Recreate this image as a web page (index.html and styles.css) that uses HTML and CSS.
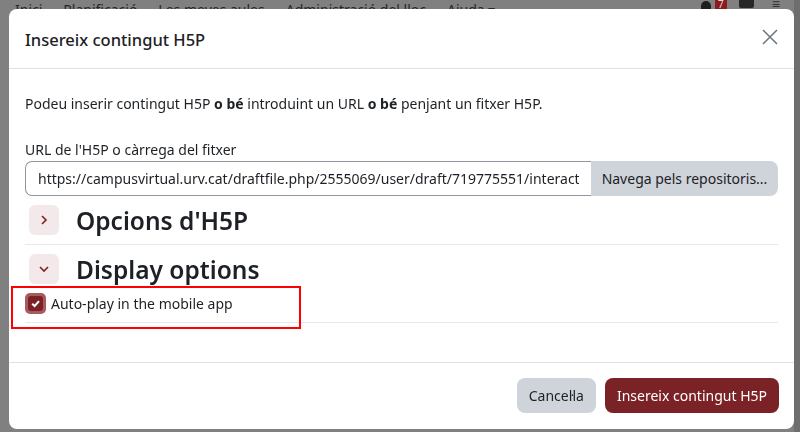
FILE: index.html
```html
<!DOCTYPE html>
<html lang="ca">
<head>
  <meta charset="UTF-8">
  <meta name="viewport" content="width=device-width, initial-scale=1">
  <title>Insereix contingut H5P</title>
  <link rel="stylesheet" href="styles.css">
</head>
<body>
  <!-- Pàgina de fons (sota el fons fosc del diàleg) -->
  <div class="page">
    <nav class="topnav">
      <span>Inici</span>
      <span>Planificació</span>
      <span>Les meves aules</span>
      <span>Administració del lloc</span>
      <span>Ajuda ▾</span>
    </nav>
    <div class="nav-icons">
      <span class="bell"></span>
      <span class="badge">7</span>
      <span class="chat"></span>
      <span class="more">≡</span>
    </div>
  </div>

  <div class="modal">
    <div class="modal-header">
      <h5 class="modal-title">Insereix contingut H5P</h5>
      <button class="close" aria-label="Tanca">
        <svg width="16" height="16" viewBox="0 0 16 16"><path d="M1 1 L15 15 M15 1 L1 15" stroke="#6a737b" stroke-width="1.5" fill="none"/></svg>
      </button>
    </div>

    <div class="modal-body">
      <p class="intro">Podeu inserir contingut H5P <b>o bé</b> introduint un URL <b>o bé</b> penjant un fitxer H5P.</p>

      <label class="field-label">URL de l'H5P o càrrega del fitxer</label>
      <div class="input-group">
        <input type="text" value="https://campusvirtual.urv.cat/draftfile.php/2555069/user/draft/719775551/interactive-video.h5p">
        <button class="btn-browse">Navega pels repositoris...</button>
      </div>

      <div class="section">
        <span class="toggle">
          <svg width="10" height="12" viewBox="0 0 10 12"><path d="M3 2 L7 6 L3 10" stroke="#7b2226" stroke-width="1.6" fill="none"/></svg>
        </span>
        <h3>Opcions d'H5P</h3>
      </div>

      <div class="section open">
        <span class="toggle">
          <svg width="12" height="10" viewBox="0 0 12 10"><path d="M2 3 L6 7 L10 3" stroke="#7b2226" stroke-width="1.6" fill="none"/></svg>
        </span>
        <h3>Display options</h3>
      </div>

      <div class="check-row">
        <span class="checkbox">
          <svg width="10" height="10" viewBox="0 0 10 10"><path d="M2 5.2 L4.2 7.3 L8.2 2.8" stroke="#fff" stroke-width="1.8" fill="none"/></svg>
        </span>
        <span class="check-label">Auto-play in the mobile app</span>
        <div class="highlight"></div>
      </div>
    </div>

    <div class="modal-footer">
      <button class="btn btn-secondary">Cancel·la</button>
      <button class="btn btn-primary">Insereix contingut H5P</button>
    </div>
  </div>
</body>
</html>
```

FILE: styles.css
```css
* {
  margin: 0;
  padding: 0;
  box-sizing: border-box;
}

body {
  font-family: 'Noto Sans', 'Open Sans', sans-serif;
  background: #808080;
  color: #1d2125;
  height: 100vh;
  overflow: hidden;
  border-right: 6px solid #6e6e6e;
}

/* Pàgina de fons */
.page {
  display: flex;
  justify-content: space-between;
  height: 20px;
  padding: 0 14px 0 15px;
}

.topnav {
  display: flex;
  gap: 21px;
  font-size: 14px;
  line-height: 20px;
  margin-top: 0;
  color: #262626;
}

.nav-icons {
  display: flex;
  align-items: flex-start;
  gap: 4px;
}

.bell {
  width: 10px;
  height: 8px;
  margin-top: 1px;
  background: #1f1f1f;
  border-radius: 5px 5px 0 0;
}

.badge {
  background: #8c1b1b;
  color: #ddd;
  font-size: 10px;
  line-height: 9px;
  padding: 0 3px;
  margin-right: 8px;
}

.chat {
  width: 15px;
  height: 8px;
  background: #262626;
  border-radius: 0 0 2px 2px;
  margin-right: 14px;
}

.more {
  font-size: 14px;
  line-height: 8px;
  color: #333;
}

/* Diàleg */
.modal {
  position: fixed;
  top: 9px;
  left: 9px;
  width: 785px;
  height: 420px;
  background: #fff;
  border-radius: 8px;
  display: flex;
  flex-direction: column;
}

.modal-header {
  display: flex;
  justify-content: space-between;
  align-items: center;
  height: 60px;
  padding: 0 16px 0 16px;
  border-bottom: 1px solid #dee2e6;
}

.modal-title {
  font-size: 16.5px;
  font-weight: 500;
  line-height: 22px;
  margin-top: 3px;
}

.close {
  background: none;
  border: none;
  width: 18px;
  height: 18px;
  display: flex;
  align-items: center;
  justify-content: center;
  margin-top: -3px;
  margin-right: -1px;
}

.modal-body {
  flex: 1;
  padding: 23px 16px 0 16px;
  font-size: 14px;
}

.intro {
  line-height: 23px;
  margin-bottom: 23px;
}

.intro b {
  font-weight: 700;
}

.field-label {
  display: block;
  line-height: 23px;
}

.input-group {
  display: flex;
  height: 35px;
}

.input-group input {
  flex: 1;
  min-width: 0;
  border: 1px solid #8f959e;
  border-right: none;
  border-radius: 7px 0 0 7px;
  padding: 0 12px;
  font-family: inherit;
  font-size: 14px;
  color: #1d2125;
}

.btn-browse {
  width: 187px;
  background: #ced4da;
  border: none;
  border-radius: 0 8px 8px 0;
  font-family: inherit;
  font-size: 14px;
  color: #1d2125;
}

.section {
  display: flex;
  align-items: center;
  gap: 17px;
  margin-top: 8px;
  padding: 0 0 8px 4px;
}

.section:not(.open) {
  border-bottom: 1px solid #e6e8ea;
}

.section.open {
  padding-bottom: 0;
}

.toggle {
  width: 30px;
  height: 30px;
  border-radius: 6px;
  background: #f4e9ea;
  display: flex;
  align-items: center;
  justify-content: center;
}

.section h3 {
  font-size: 24.5px;
  font-weight: 600;
  line-height: 30px;
  margin-top: 2px;
}

.check-row {
  position: relative;
  display: flex;
  align-items: center;
  gap: 5px;
  margin-top: 8px;
  padding-bottom: 8px;
  border-bottom: 1px solid #e6e8ea;
}

.checkbox {
  width: 21px;
  height: 21px;
  border-radius: 5px;
  background: #a85a5e;
  display: flex;
  align-items: center;
  justify-content: center;
}

.checkbox svg {
  background: #7b2226;
  width: 15px;
  height: 15px;
  border-radius: 3px;
  padding: 2px;
}

.check-label {
  line-height: 21px;
}

/* Marc vermell d'anotació */
.highlight {
  position: absolute;
  left: -14px;
  top: -7px;
  width: 290px;
  height: 43px;
  border: 2px solid #ff0000;
}

.modal-footer {
  display: flex;
  justify-content: flex-end;
  gap: 9px;
  padding: 15px 15px 16px 16px;
  border-top: 1px solid #dee2e6;
}

.btn {
  height: 35px;
  border: none;
  border-radius: 8px;
  font-family: inherit;
  font-size: 14px;
  padding: 0 12px;
}

.btn-secondary {
  background: #ced4da;
  color: #1d2125;
}

.btn-primary {
  background: #7b2226;
  color: #fff;
}
```
